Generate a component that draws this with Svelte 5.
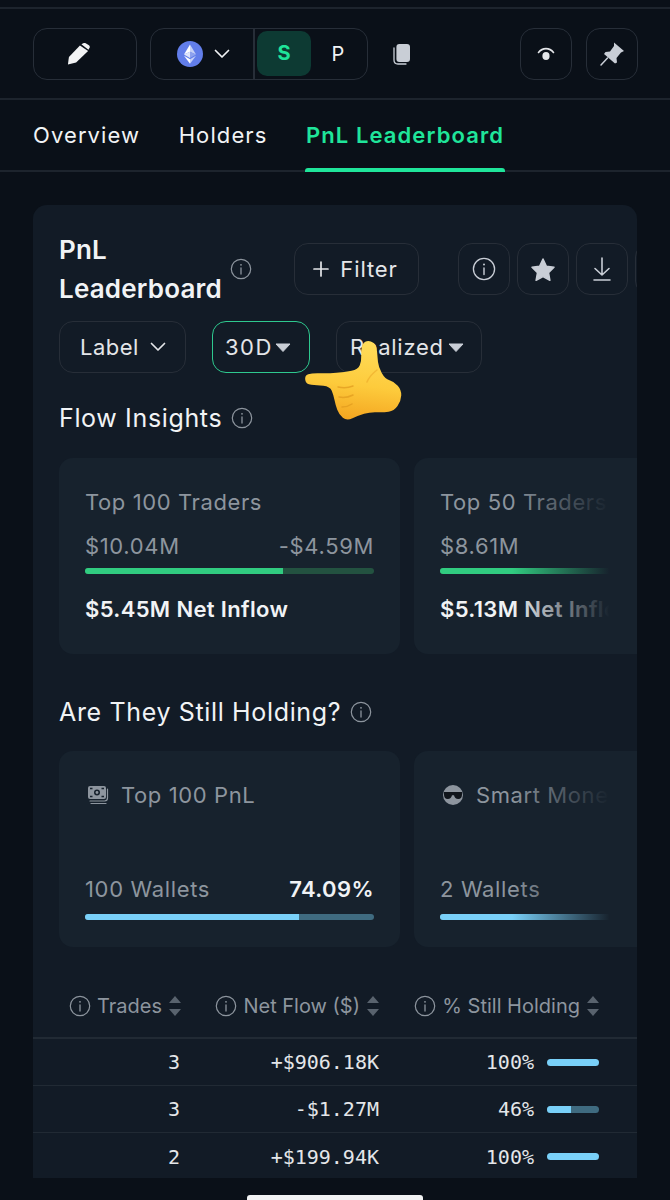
<script lang="ts">
	const tabs = ['Overview', 'Holders', 'PnL Leaderboard'];
	const rows = [
		{ trades: 3, flow: '+$906.18K', pct: 100 },
		{ trades: 3, flow: '-$1.27M', pct: 46 },
		{ trades: 2, flow: '+$199.94K', pct: 100 }
	];
	const columns = ['Trades', 'Net Flow ($)', '% Still Holding'];

	// outline of the pointing hand, smoothed through the midpoints
	const handPoints = [
		[304.5, 375.5], [312, 373], [328, 373.5], [345, 372], [358, 369.5], [361.5, 361], [361, 349],
		[363.5, 342], [370, 340.5], [376.5, 345], [377.5, 357], [378.5, 367], [385, 379],
		[394, 381.5], [401.5, 390], [401, 401], [394, 411], [383.3, 412.5], [370, 412],
		[358.3, 415.5], [346.7, 421], [339, 414.5], [335.5, 405], [333.5, 395], [330, 386.5],
		[316.7, 385], [306, 384.5]
	];
	const mid = (a: number[], b: number[]) => `${(a[0] + b[0]) / 2} ${(a[1] + b[1]) / 2}`;
	const handPath =
		`M${mid(handPoints[handPoints.length - 1], handPoints[0])}` +
		handPoints
			.map((p, i) => `Q${p[0]} ${p[1]} ${mid(p, handPoints[(i + 1) % handPoints.length])}`)
			.join('') +
		'Z';
</script>

{#snippet info(size = 22)}
	<svg class="info" width={size} height={size} viewBox="0 0 22 22" fill="none" stroke="currentColor" aria-hidden="true">
		<circle cx="11" cy="11" r="9.7" stroke-width="1.2" />
		<path d="M11 10v6" stroke-width="1.3" stroke-linecap="round" />
		<circle cx="11" cy="6.8" r="0.9" fill="currentColor" stroke="none" />
	</svg>
{/snippet}

{#snippet chevron()}
	<svg width="16" height="10" viewBox="0 0 16 10" fill="none" stroke="currentColor" stroke-width="1.7" stroke-linecap="round" stroke-linejoin="round" aria-hidden="true">
		<path d="M1.5 1.5 8 8l6.5-6.5" />
	</svg>
{/snippet}

{#snippet caret()}
	<svg class="caret" width="16" height="9" viewBox="0 0 16 9" aria-hidden="true"><path d="M1 1h14L8 8.5z" fill="#c9ced6" stroke="#c9ced6" stroke-linejoin="round" /></svg>
{/snippet}

<div class="page">
	<div class="rule first"></div>

	<header class="toolbar">
		<button class="btn pencil" type="button" aria-label="Edit">
			<svg width="23" height="22" viewBox="0 0 24 26" preserveAspectRatio="none" aria-hidden="true">
				<path d="M1 25.500l1-9L13.500 3l8.500 6.500L9.500 23z" fill="#f2f3f4" />
				<path d="M15 1.500 16.500.6c1-.9 2.400-.9 3.400-.1l3 2.200c1 .8 1.200 2.200.5 3.300l-1 1.900z" fill="#f2f3f4" />
			</svg>
		</button>

		<div class="chain">
			<div class="chain-pick">
				<svg width="26" height="26" viewBox="0 0 26 26" aria-hidden="true">
					<circle cx="13" cy="13" r="13" fill="#627eea" />
					<path d="M13 3.500v7.300l6 2.700z" fill="#c6d1f7" />
					<path d="M13 3.500 7 13.500l6-2.700z" fill="#fff" />
					<path d="M13 10.800v6.300l6-3.600z" fill="#8ea2ee" />
					<path d="M13 10.800 7 13.500l6 3.600z" fill="#dfe5fb" />
					<path d="M13 18.300v4.400l6-8z" fill="#c6d1f7" />
					<path d="M13 18.300 7 14.700l6 8z" fill="#fff" />
				</svg>
				{@render chevron()}
			</div>
			<div class="sp">
				<span class="s">S</span>
				<span class="p">P</span>
			</div>
		</div>

		<svg class="copy" width="18" height="22" viewBox="0 0 18 22" aria-hidden="true">
			<path d="M1 5v12c0 2.500 1.500 4 4 4h8" fill="none" stroke="#c9ced6" stroke-width="1.300" stroke-linecap="round" />
			<rect x="3.400" y="1" width="13.600" height="18" rx="3" fill="#c9ced6" />
		</svg>

		<div class="right">
			<button class="btn square" type="button" aria-label="Watch">
				<svg width="20" height="18" viewBox="0 0 20 18" fill="none" aria-hidden="true">
					<path d="M2.500 7.500C6.500 2.300 13.500 2.300 17.500 7.500" stroke="#e4e6e9" stroke-width="1.600" stroke-linecap="round" />
					<ellipse cx="10" cy="11" rx="3.600" ry="4" fill="#e4e6e9" />
				</svg>
			</button>
			<button class="btn square" type="button" aria-label="Pin">
				<svg width="26" height="26" viewBox="0 0 26 26" aria-hidden="true">
					<path d="M15 1.500 25 10l-3 1.500-4.500 5.500.5 4.500-2 1-11-9.500 1.500-2 4.500-.5L15 5z" fill="#c9ced6" />
					<path d="M8.500 17 2 24" stroke="#c9ced6" stroke-width="1.500" stroke-linecap="round" />
				</svg>
			</button>
		</div>
	</header>

	<nav class="tabs">
		{#each tabs as tab, i}
			<span class="tab" class:active={i === 2}>{tab}</span>
		{/each}
	</nav>

	<main class="panel">
		<div class="title-row">
			<h1>PnL<br />Leaderboard</h1>
			<span class="title-info">{@render info()}</span>
			<button class="btn filter" type="button">
				<svg width="16" height="16" viewBox="0 0 16 16" stroke="currentColor" stroke-width="1.700" stroke-linecap="round" aria-hidden="true"><path d="M8 1v14M1 8h14" /></svg>
				Filter
			</button>
			<div class="tools">
				<button class="btn tool" type="button" aria-label="Info">{@render info(24)}</button>
				<button class="btn tool" type="button" aria-label="Favourite">
					<svg width="26" height="25" viewBox="0 0 26 25" aria-hidden="true">
						<path d="M13 2l3.400 7.200 7.600 1-5.500 5.400 1.400 7.700L13 19.600l-6.900 3.700 1.400-7.700L2 10.200l7.600-1z" fill="#c9ced6" stroke="#c9ced6" stroke-width="1.500" stroke-linejoin="round" />
					</svg>
				</button>
				<button class="btn tool" type="button" aria-label="Download">
					<svg width="20" height="26" viewBox="0 0 20 26" fill="none" stroke="#c9ced6" stroke-width="1.600" stroke-linecap="round" stroke-linejoin="round" aria-hidden="true">
						<path d="M10 2v17M3 12.500l7 6.500 7-6.500M2 24h16" />
					</svg>
				</button>
				<button class="btn tool" type="button" aria-label="More"></button>
			</div>
		</div>

		<div class="filters">
			<button class="btn pick label" type="button">Label {@render chevron()}</button>
			<button class="btn pick days" type="button">30D{@render caret()}</button>
			<button class="btn pick realized" type="button">Realized{@render caret()}</button>
		</div>

		<h2 class="flow-title">Flow Insights {@render info()}</h2>

		<div class="cards">
			<section class="card">
				<div class="card-name">Top 100 Traders</div>
				<div class="amounts"><span>$10.04M</span><span>-$4.59M</span></div>
				<div class="bar green"><i style="width: 68.6%"></i></div>
				<div class="net">$5.45M Net Inflow</div>
			</section>
			<section class="card second">
				<div class="card-name">Top 50 Traders</div>
				<div class="amounts"><span>$8.61M</span></div>
				<div class="bar green"><i style="width: 71%"></i></div>
				<div class="net">$5.13M Net Inflow</div>
			</section>
			<div class="fade"></div>
		</div>

		<h2 class="hold-title">Are They Still Holding? {@render info()}</h2>

		<div class="cards hold-cards">
			<section class="card hold">
				<div class="card-name with-icon">
					<svg width="22" height="22" viewBox="0 0 22 22" aria-hidden="true">
						<rect x="1" y="2" width="18" height="13" rx="2" fill="#8d959e" />
						<circle cx="10" cy="8.500" r="3" fill="#17222d" />
						<circle cx="10" cy="8.500" r="1.400" fill="#8d959e" />
						<path d="M3 4.500h2.500M14.500 12.500H17M3 12.500h2.500M14.500 4.500H17" stroke="#17222d" stroke-width="1.500" />
						<path d="M20.500 5v9c0 2-1 3-3 3H3M19 19.500H4" fill="none" stroke="#8d959e" stroke-width="1.200" stroke-linecap="round" />
					</svg>
					Top 100 PnL
				</div>
				<div class="wallets"><span>100 Wallets</span><b>74.09%</b></div>
				<div class="bar blue"><i style="width: 74.09%"></i></div>
			</section>
			<section class="card hold second">
				<div class="card-name with-icon">
					<svg width="22" height="22" viewBox="0 0 22 22" aria-hidden="true">
						<circle cx="11" cy="11" r="10" fill="#8d959e" />
						<path d="M2 8h18v2.500c0 2.500-1 4.500-3.800 4.500-2.300 0-3.700-1.600-4.200-3.800h-2C9.500 13.400 8.100 15 5.800 15 3 15 2 13 2 10.500z" fill="#10151b" />
					</svg>
					Smart Money
				</div>
				<div class="wallets"><span>2 Wallets</span></div>
				<div class="bar blue"><i style="width: 74%"></i></div>
			</section>
			<div class="fade"></div>
		</div>

		<div class="table">
			<div class="thead">
				{#each columns as col}
					<div class="th">
						{@render info()}
						<span>{col}</span>
						<svg class="sort" width="12" height="20" viewBox="0 0 12 20" aria-hidden="true">
							<path d="M6 0l6 7H0z" fill="#59636e" />
							<path d="M6 20l6-7H0z" fill="#59636e" />
						</svg>
					</div>
				{/each}
			</div>
			{#each rows as row}
				<div class="tr">
					<div>{row.trades}</div>
					<div>{row.flow}</div>
					<div class="pct">
						<span>{row.pct}%</span>
						<div class="bar blue small"><i style="width: {row.pct}%"></i></div>
					</div>
				</div>
			{/each}
		</div>
	</main>

	<div class="home"></div>

	<!-- pointing hand sits over the filter row -->
	<svg class="hand" width="100" height="84" viewBox="304 340 100 84" aria-hidden="true">
		<defs>
			<linearGradient id="skin" x1="0.55" y1="0" x2="0.4" y2="1">
				<stop offset="0" stop-color="#ffdc5a" />
				<stop offset="0.55" stop-color="#fdcb3c" />
				<stop offset="1" stop-color="#f4a520" />
			</linearGradient>
		</defs>
		<path d={handPath} fill="url(#skin)" />
		<path d="M338 387c5 1 10 1 15-1M339 397c5 1 10 0 14-2M342 407c4 0 7-1 10-3" fill="none" stroke="#e09a1e" stroke-width="1.5" stroke-linecap="round" opacity="0.7" />
		<path d="M377 370c-4 3-8 7-10 12" fill="none" stroke="#eba92a" stroke-width="1.5" stroke-linecap="round" opacity="0.6" />
	</svg>
</div>

<style>
	:global(body) {
		background: #0a1018;
	}

	.page {
		position: relative;
		height: 1200px;
		overflow: hidden;
		background: #0a1018;
		color: #f1f3f5;
		font-family: Inter, 'Liberation Sans', sans-serif;
	}

	.rule.first {
		height: 2px;
		margin-top: 7px;
		background: #1d242d;
	}

	button {
		font-family: inherit;
		color: inherit;
	}

	.btn {
		display: inline-flex;
		align-items: center;
		justify-content: center;
		height: 52px;
		padding: 0;
		background: transparent;
		border: 1px solid #272e38;
		border-radius: 14px;
		flex: none;
	}

	.toolbar {
		display: flex;
		align-items: center;
		height: 91px;
		padding: 0 32px 0 33px;
		border-bottom: 2px solid #1d242d;
		box-sizing: border-box;
	}

	.pencil {
		width: 104px;
		padding-right: 14px;
	}

	.chain {
		display: flex;
		width: 218px;
		height: 52px;
		margin-left: 13px;
		border: 1px solid #272e38;
		border-radius: 14px;
		box-sizing: border-box;
	}

	.chain-pick {
		display: flex;
		align-items: center;
		justify-content: flex-start;
		gap: 11px;
		width: 104px;
		padding-left: 26px;
		box-sizing: border-box;
		border-right: 2px solid #272e38;
	}

	.sp {
		display: flex;
		align-items: center;
		padding-left: 2px;
		font-size: 20px;
	}

	.s {
		width: 54px;
		height: 45px;
		line-height: 45px;
		text-align: center;
		border-radius: 10px;
		background: #0d3a33;
		color: #1fe59a;
		font-weight: 700;
	}

	.p {
		width: 54px;
		text-align: center;
	}

	.copy {
		margin-left: 25px;
	}

	.right {
		display: flex;
		gap: 14px;
		margin-left: auto;
	}

	.square {
		width: 52px;
	}

	.tabs {
		display: flex;
		gap: 38.5px;
		height: 72px;
		padding-left: 33px;
		border-bottom: 2px solid #1d242d;
		box-sizing: border-box;
		font-size: 22px;
		letter-spacing: 1.1px;
	}

	.tab {
		position: relative;
		line-height: 70px;
		height: 70px;
		white-space: nowrap;
	}

	.tab.active {
		color: #1fe59a;
		font-weight: 600;
	}

	.tab.active::after {
		content: '';
		position: absolute;
		left: -1px;
		right: -1px;
		bottom: -2px;
		height: 4px;
		border-radius: 3px 3px 0 0;
		background: #1fe59a;
	}

	.panel {
		position: relative;
		margin: 33px 33px 0;
		height: 973px;
		padding-top: 25px;
		box-sizing: border-box;
		background: #121b26;
		border-radius: 14px 14px 0 0;
		overflow: hidden;
	}

	.title-row {
		display: flex;
		align-items: center;
		height: 78px;
		padding-left: 26px;
	}

	h1 {
		margin: 0;
		width: 163px;
		flex: none;
		font-size: 26px;
		letter-spacing: 0.2px;
		line-height: 39px;
		font-weight: 600;
		white-space: nowrap;
	}

	.title-info {
		display: flex;
		width: 64px;
		margin-left: 8px;
		flex: none;
		color: #8d959e;
	}

	.info {
		flex: none;
		color: #8d959e;
	}

	.filter {
		width: 125px;
		gap: 11px;
		padding-right: 2px;
		font-size: 22px;
		letter-spacing: 0.9px;
		color: #e4e6e9;
	}

	.tools {
		display: flex;
		gap: 7px;
		margin-left: 39px;
		flex: none;
	}

	.tool {
		width: 52px;
	}

	.tool .info {
		color: #c9ced6;
	}

	.filters {
		display: flex;
		gap: 26px;
		padding: 13px 26px 0;
	}

	.pick {
		justify-content: flex-start;
		font-size: 22px;
		letter-spacing: 0.7px;
		color: #e4e6e9;
	}

	.label {
		width: 127px;
		gap: 11px;
		padding-left: 20px;
		letter-spacing: 0.5px;
	}

	.days {
		width: 98px;
		gap: 2px;
		padding-left: 12px;
		letter-spacing: 1.5px;
		border: 1.5px solid #2ec98f;
	}

	.realized {
		width: 146px;
		gap: 4px;
		padding-left: 13px;
	}

	h2 {
		display: flex;
		align-items: center;
		gap: 9px;
		margin: 0;
		padding-left: 26px;
		font-size: 25px;
		font-weight: 400;
		letter-spacing: 0.65px;
		line-height: 32px;
		color: #f1f3f5;
	}

	.flow-title {
		margin-top: 29px;
	}

	.hold-title {
		margin-top: 42px;
	}

	.cards {
		position: relative;
		display: flex;
		gap: 14px;
		margin-top: 24px;
		padding-left: 26px;
	}

	.cards.hold-cards {
		margin-top: 23px;
	}

	.card {
		flex: none;
		width: 341px;
		height: 196px;
		padding: 30px 26px 0;
		box-sizing: border-box;
		background: #17222d;
		border-radius: 14px;
	}

	.fade {
		position: absolute;
		top: 0;
		bottom: 0;
		right: 0;
		width: 125px;
		background: linear-gradient(to right, rgba(23, 34, 45, 0), #17222d 78%);
	}

	.card-name {
		font-size: 22px;
		letter-spacing: 0.6px;
		line-height: 28px;
		color: #8d959e;
		white-space: nowrap;
	}

	.amounts,
	.wallets {
		display: flex;
		justify-content: space-between;
		font-size: 22px;
		letter-spacing: 0.65px;
		line-height: 28px;
		color: #8d959e;
		white-space: nowrap;
	}

	.amounts {
		margin-top: 16px;
	}

	.bar {
		position: relative;
		height: 6px;
		border-radius: 3px;
		overflow: hidden;
	}

	.bar i {
		display: block;
		height: 100%;
	}

	.bar.green {
		margin-top: 8px;
		background: #235240;
	}

	.bar.green i {
		background: #31cc80;
	}

	.bar.blue {
		background: #3f6b80;
	}

	.bar.blue i {
		background: #79d0f8;
	}

	.net {
		margin-top: 21px;
		font-size: 22px;
		letter-spacing: 0.35px;
		line-height: 28px;
		font-weight: 600;
		white-space: nowrap;
	}

	.with-icon {
		display: flex;
		align-items: center;
		gap: 12px;
		padding-left: 2px;
		height: 30px;
		margin-top: -1px;
	}

	.wallets {
		margin-top: 65px;
	}

	.wallets b {
		font-weight: 600;
		letter-spacing: 0.4px;
		color: #f1f3f5;
	}

	.hold .bar {
		margin-top: 11px;
	}

	.table {
		margin-top: 25px;
	}

	.thead,
	.tr {
		display: grid;
		grid-template-columns: 148px 198px 220px;
	}

	.thead {
		height: 67px;
		padding-top: 3px;
		border-bottom: 2px solid #212a34;
		box-sizing: border-box;
	}

	.th {
		display: flex;
		align-items: center;
		justify-content: flex-end;
		gap: 6px;
		font-size: 20px;
		color: #8d959e;
		white-space: nowrap;
	}

	.sort {
		margin-left: 1px;
	}

	.tr {
		height: 47px;
		align-items: center;
		border-bottom: 1px solid #212a34;
		box-sizing: border-box;
		font-family: 'DejaVu Sans Mono', 'Liberation Mono', monospace;
		font-size: 20px;
		text-align: right;
		color: #e4e6e9;
	}

	.tr > div:first-child {
		padding-right: 1px;
	}

	.tr:last-child {
		border-bottom: 0;
	}

	.pct {
		display: flex;
		align-items: center;
		justify-content: flex-end;
		gap: 13px;
	}

	.bar.small {
		width: 52px;
		height: 7px;
		border-radius: 4px;
		flex: none;
	}

	.home {
		position: absolute;
		left: 247px;
		bottom: 0;
		width: 176px;
		height: 5px;
		border-radius: 3px 3px 0 0;
		background: #f2f3f4;
	}

	.hand {
		position: absolute;
		left: 304px;
		top: 340px;
	}
</style>
